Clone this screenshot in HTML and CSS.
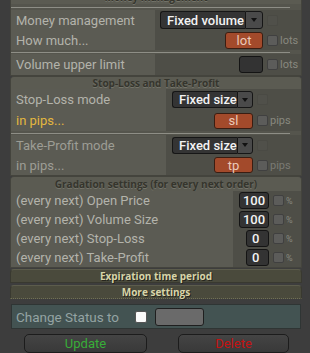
FILE: index.html
```html
<!DOCTYPE html>
<html>
<head>
<meta charset="utf-8">
<link rel="stylesheet" href="styles.css">
</head>
<body>
<div class="wrap">
  <div class="panel p1">
    <div class="phead">Money management</div>
    <div class="sep s1"><div class="line"></div></div>
    <div class="row h20">
      <div class="lab">Money management</div>
      <div class="ctl"><div class="select w85"><span class="sv">Fixed volume</span><span class="sbtn"><i class="tri"></i></span></div></div>
      <div class="cbc"><span class="cb faint"></span></div>
      <div class="unit"></div>
    </div>
    <div class="row h20">
      <div class="lab">How much...</div>
      <div class="ctl"><div class="inp rust w38">lot</div></div>
      <div class="cbc"><span class="cb"></span></div>
      <div class="unit">lots</div>
    </div>
    <div class="sep s2"><div class="line"></div></div>
    <div class="row h21">
      <div class="lab">Volume upper limit</div>
      <div class="ctl"><div class="inp dark w24"></div></div>
      <div class="cbc"><span class="cb"></span></div>
      <div class="unit">lots</div>
    </div>
  </div>

  <div class="panel p2">
    <div class="phead h12">Stop-Loss and Take-Profit</div>
    <div class="row h21">
      <div class="lab">Stop-Loss mode</div>
      <div class="ctl"><div class="select w63"><span class="sv">Fixed size</span><span class="sbtn"><i class="tri"></i></span></div></div>
      <div class="cbc"><span class="cb faint"></span></div>
      <div class="unit"></div>
    </div>
    <div class="row h21">
      <div class="lab yel">in pips...</div>
      <div class="ctl"><div class="inp rust w39">sl</div></div>
      <div class="cbc"><span class="cb"></span></div>
      <div class="unit">pips</div>
    </div>
    <div class="sep s3"><div class="line"></div></div>
    <div class="row h20 dim">
      <div class="lab">Take-Profit mode</div>
      <div class="ctl"><div class="select w63"><span class="sv">Fixed size</span><span class="sbtn"><i class="tri"></i></span></div></div>
      <div class="cbc"><span class="cb faint"></span></div>
      <div class="unit"></div>
    </div>
    <div class="row h20 dim">
      <div class="lab">in pips...</div>
      <div class="ctl"><div class="inp rust w39">tp</div></div>
      <div class="cbc"><span class="cb"></span></div>
      <div class="unit">pips</div>
    </div>
  </div>

  <div class="panel p3">
    <div class="phead">Gradation settings (for every next order)</div>
    <div class="row h19">
      <div class="lab">(every next) Open Price</div>
      <div class="ctl"><div class="inp dark w30">100</div></div>
      <div class="cbc"><span class="cb"></span></div>
      <div class="unit pct">%</div>
    </div>
    <div class="row h19">
      <div class="lab">(every next) Volume Size</div>
      <div class="ctl"><div class="inp dark w30">100</div></div>
      <div class="cbc"><span class="cb"></span></div>
      <div class="unit pct">%</div>
    </div>
    <div class="row h19">
      <div class="lab">(every next) Stop-Loss</div>
      <div class="ctl"><div class="inp dark w23">0</div></div>
      <div class="cbc"><span class="cb"></span></div>
      <div class="unit pct">%</div>
    </div>
    <div class="row h19">
      <div class="lab">(every next) Take-Profit</div>
      <div class="ctl"><div class="inp dark w23">0</div></div>
      <div class="cbc"><span class="cb"></span></div>
      <div class="unit pct">%</div>
    </div>
  </div>

  <div class="bar">Expiration time period</div>
  <div class="bar more">More settings</div>

  <div class="status">
    <span class="slab">Change Status to</span>
    <span class="wcb"></span>
    <span class="gbox"></span>
  </div>

  <div class="btns">
    <div class="btn upd">Update</div>
    <div class="btn del">Delete</div>
  </div>
</div>
</body>
</html>
```

FILE: styles.css
```css
html, body {
  margin: 0;
  padding: 0;
  background: #3d3d3d;
  font-family: Roboto, "Open Sans", sans-serif;
  font-size: 13px;
  overflow: hidden;
}
.wrap {
  margin-left: 10px;
  width: 292px;
}
.panel {
  background: #55554d;
  border: 1px solid #44443d;
  border-radius: 4px 4px 0 0;
}
.p1 { margin-top: -11px; }
.phead {
  height: 14px;
  line-height: 14px;
  text-align: center;
  font-family: "Open Sans", sans-serif;
  font-weight: bold;
  font-size: 10px;
  color: #35352d;
  text-shadow: 0 1px 0 #74746a;
  background: #5b5b52;
  border-radius: 3px 3px 0 0;
  white-space: nowrap;
}
.phead.h12 { height: 12px; line-height: 12px; }
.sep { display: flex; flex-direction: column; }
.sep .line {
  height: 1px;
  background: #8e8e86;
  margin-right: 11px;
}
.s1 { padding: 3px 0 2px; }
.s2 { padding: 2px 0 1px; }
.s3 { padding: 2px 0 1px; }
.row {
  display: grid;
  align-items: center;
  background: #4e4e47;
}
.p1 .row { grid-template-columns: 144px 108px 16px 21px; }
.p2 .row { grid-template-columns: 155px 87px 16px 31px; }
.p3 .row { grid-template-columns: 222px 36px 16px 15px; }
.h19 { height: 19px; }
.h20 { height: 20px; }
.h21 { height: 21px; }
.lab {
  height: 100%;
  display: flex;
  align-items: center;
  padding-left: 5px;
  background: #5b5b53;
  color: #b3b3ab;
  white-space: nowrap;
}
.lab.yel { color: #e3b73f; }
.dim .lab { color: #9d9d95; }
.ctl {
  display: flex;
  justify-content: flex-end;
  align-items: center;
}
.cbc {
  display: flex;
  align-items: center;
  padding-left: 4px;
}
.cb {
  width: 9px;
  height: 9px;
  background: #5c5c5a;
  border: 1px solid #404040;
  border-radius: 2px;
}
.cb.faint {
  background: #50504a;
  border-color: #4a4a44;
}
.unit {
  padding-left: 1px;
  color: #88887f;
  font-size: 11px;
}
.dim .unit { color: #7a7a74; }
.unit.pct { font-size: 9px; padding-left: 1px; }
.select {
  display: flex;
  height: 18px;
  box-sizing: border-box;
}
.p2 .select { height: 17px; }
.sv {
  flex: 1;
  box-sizing: border-box;
  border: 1px solid #161616;
  border-right: none;
  border-radius: 3px 0 0 3px;
  background: #343434;
  color: #f2f2f2;
  font-weight: 500;
  padding-left: 6px;
  display: flex;
  align-items: center;
  white-space: nowrap;
}
.w85 { width: 103px; }
.w63 { width: 81px; }
.sbtn {
  width: 18px;
  box-sizing: border-box;
  border: 1px solid #161616;
  border-radius: 0 3px 3px 0;
  background: #4a4a4a;
  display: flex;
  align-items: center;
  justify-content: center;
}
.tri {
  width: 0;
  height: 0;
  border-left: 3px solid transparent;
  border-right: 3px solid transparent;
  border-top: 4px solid #111;
}
.inp {
  box-sizing: border-box;
  height: 17px;
  border-radius: 3px;
  display: flex;
  align-items: center;
  justify-content: center;
  font-size: 13px;
}
.p2 .inp { height: 16px; }
.rust {
  background: #a34a2b;
  border: 1px solid #3a1d12;
  color: #ecc9b8;
}
.dark {
  background: #333333;
  border: 1px solid #141414;
  color: #f2f2f2;
  font-weight: 500;
}
.w38 { width: 38px; }
.w39 { width: 39px; }
.w24 { width: 24px; }
.w30 { width: 30px; }
.w23 { width: 23px; justify-content: flex-start; padding-left: 5px; }
.bar {
  margin-top: 1px;
  height: 14px;
  box-sizing: border-box;
  background: #4a4a3c;
  border: 1px solid #393930;
  border-top-color: #5c5c4c;
  border-radius: 4px 4px 0 0;
  text-align: center;
  font-family: "Open Sans", sans-serif;
  font-weight: bold;
  font-size: 10px;
  line-height: 12px;
  color: #d8d5a9;
  text-shadow: 1px 1px 0 #25251d;
}
.bar.more {
  margin-top: 2px;
  border-bottom: 1px dotted #707055;
}
.status {
  margin: 5px 1px 0 1px;
  height: 25px;
  box-sizing: border-box;
  background: #435352;
  border: 1px solid #2f3534;
  display: flex;
  align-items: center;
}
.slab {
  padding-left: 4px;
  color: #94a3a3;
  width: 115px;
  font-size: 13.5px;
}
.wcb {
  width: 10px;
  height: 10px;
  background: #fafafa;
  border: 1px solid #555;
  border-radius: 2px;
  margin-left: 4px;
}
.gbox {
  margin-left: 8px;
  width: 49px;
  height: 18px;
  box-sizing: border-box;
  background: #6a6a6a;
  border: 1px solid #1f1f1f;
  border-radius: 3px;
}
.btns {
  display: flex;
  margin-top: 5px;
  padding-left: 14px;
}
.btn {
  box-sizing: border-box;
  height: 19px;
  border: 1px solid #1c1c1c;
  border-radius: 5px;
  background: linear-gradient(#444444, #393939);
  text-align: center;
  line-height: 17px;
  font-size: 13px;
}
.upd { width: 123px; color: #38ad38; }
.del { width: 111px; margin-left: 31px; color: #c41212; }
```
